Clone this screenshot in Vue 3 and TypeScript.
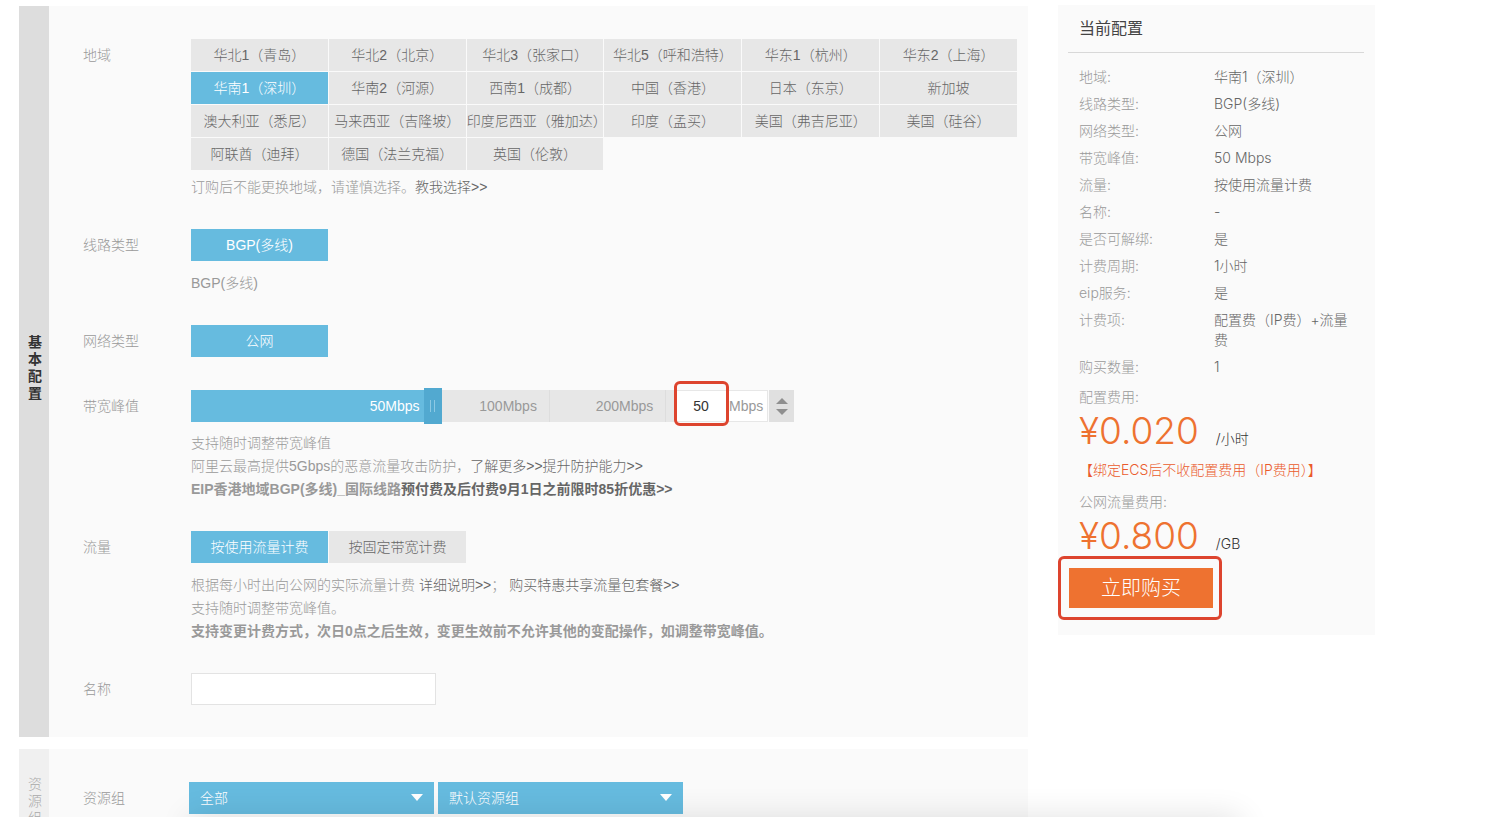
<script setup lang="ts">
import { computed, ref } from 'vue'

interface SummaryItem {
  label: string
  value: string
}

const regions: string[] = [
  '华北1（青岛）', '华北2（北京）', '华北3（张家口）', '华北5（呼和浩特）', '华东1（杭州）', '华东2（上海）',
  '华南1（深圳）', '华南2（河源）', '西南1（成都）', '中国（香港）', '日本（东京）', '新加坡',
  '澳大利亚（悉尼）', '马来西亚（吉隆坡）', '印度尼西亚（雅加达）', '印度（孟买）', '美国（弗吉尼亚）', '美国（硅谷）',
  '阿联酋（迪拜）', '德国（法兰克福）', '英国（伦敦）',
]
const billingModes: string[] = ['按使用流量计费', '按固定带宽计费']

const region = ref('华南1（深圳）')
const billing = ref('按使用流量计费')
const bandwidth = ref(50)
const name = ref('')
const groupScope = ref('全部')
const group = ref('默认资源组')

// The scale is piecewise linear: [bandwidth, percent of the track].
const stops: [number, number][] = [[0, 0], [50, 50], [100, 74], [200, 98]]

function interpolate(x: number, from: 0 | 1, to: 0 | 1): number {
  for (let i = 1; i < stops.length; i++) {
    const a = stops[i - 1]
    const b = stops[i]
    if (x <= b[from]) {
      return a[to] + ((x - a[from]) / (b[from] - a[from])) * (b[to] - a[to])
    }
  }
  return stops[stops.length - 1][to]
}

const position = computed({
  get: () => interpolate(bandwidth.value, 0, 1),
  set: (p: number) => {
    bandwidth.value = Math.max(1, Math.round(interpolate(p, 1, 0)))
  },
})

function step(delta: number) {
  bandwidth.value = Math.min(200, Math.max(1, bandwidth.value + delta))
}

const summary = computed<SummaryItem[]>(() => [
  { label: '地域', value: region.value },
  { label: '线路类型', value: 'BGP(多线)' },
  { label: '网络类型', value: '公网' },
  { label: '带宽峰值', value: `${bandwidth.value} Mbps` },
  { label: '流量', value: billing.value },
  { label: '名称', value: name.value || '-' },
  { label: '是否可解绑', value: '是' },
  { label: '计费周期', value: '1小时' },
  { label: 'eip服务', value: '是' },
  { label: '计费项', value: '配置费（IP费）+流量费' },
  { label: '购买数量', value: '1' },
])
</script>

<template>
  <div class="page" lang="zh-CN">
    <main class="main">
      <section class="panel">
        <h2 class="tab tab-active"><span>基本配置</span></h2>
        <div class="rows">
          <div class="row" role="group" aria-labelledby="l-region">
            <span id="l-region" class="label">地域</span>
            <div>
              <div class="regions">
                <button
                  v-for="r in regions"
                  :key="r"
                  type="button"
                  class="option"
                  :class="{ on: r === region }"
                  :aria-pressed="r === region"
                  @click="region = r"
                >{{ r }}</button>
              </div>
              <p class="notes notes-tight">订购后不能更换地域，请谨慎选择。<a href="#">教我选择&gt;&gt;</a></p>
            </div>
          </div>

          <div class="row" role="group" aria-labelledby="l-line">
            <span id="l-line" class="label">线路类型</span>
            <div>
              <div class="options">
                <button type="button" class="option on" aria-pressed="true">BGP(多线)</button>
              </div>
              <p class="notes">BGP(多线)</p>
            </div>
          </div>

          <div class="row" role="group" aria-labelledby="l-net">
            <span id="l-net" class="label">网络类型</span>
            <div class="options">
              <button type="button" class="option on" aria-pressed="true">公网</button>
            </div>
          </div>

          <div class="row">
            <label class="label label-slider" for="bandwidth">带宽峰值</label>
            <div>
              <div class="bandwidth">
                <div class="slider">
                  <div class="fill" :style="{ width: position + '%' }"></div>
                  <span class="seg seg-first">50Mbps</span>
                  <span class="seg">100Mbps</span>
                  <span class="seg">200Mbps</span>
                  <div class="handle" :style="{ left: position + '%' }"><i></i><i></i></div>
                  <input v-model.number="position" class="range" type="range" min="0" max="98" step="1" aria-label="带宽峰值">
                </div>
                <div class="amount">
                  <input id="bandwidth" v-model.number="bandwidth" type="text" inputmode="numeric">
                  <span>Mbps</span>
                </div>
                <div class="stepper">
                  <button type="button" aria-label="增加" @click="step(1)">
                    <svg width="12" height="6" viewBox="0 0 12 6"><path d="M0 6 6 0l6 6z" fill="#8f8f8f" /></svg>
                  </button>
                  <button type="button" aria-label="减少" @click="step(-1)">
                    <svg width="12" height="6" viewBox="0 0 12 6"><path d="M0 0h12L6 6z" fill="#8f8f8f" /></svg>
                  </button>
                </div>
              </div>
              <p class="notes notes-slider">
                支持随时调整带宽峰值<br>
                阿里云最高提供5Gbps的恶意流量攻击防护，<a href="#">了解更多&gt;&gt;</a><a href="#">提升防护能力&gt;&gt;</a><br>
                <b>EIP香港地域BGP(多线)_国际线路<a href="#">预付费及后付费9月1日之前限时85折优惠&gt;&gt;</a></b>
              </p>
            </div>
          </div>

          <div class="row" role="group" aria-labelledby="l-bill">
            <span id="l-bill" class="label">流量</span>
            <div>
              <div class="options">
                <button
                  v-for="m in billingModes"
                  :key="m"
                  type="button"
                  class="option"
                  :class="{ on: m === billing }"
                  :aria-pressed="m === billing"
                  @click="billing = m"
                >{{ m }}</button>
              </div>
              <p class="notes">
                根据每小时出向公网的实际流量计费 <a href="#">详细说明&gt;&gt;</a>； <a href="#">购买特惠共享流量包套餐&gt;&gt;</a><br>
                支持随时调整带宽峰值。<br>
                <b>支持变更计费方式，次日0点之后生效，变更生效前不允许其他的变配操作，如调整带宽峰值。</b>
              </p>
            </div>
          </div>

          <div class="row">
            <label class="label" for="name">名称</label>
            <input id="name" v-model="name" class="text-input" type="text">
          </div>
        </div>
      </section>

      <section class="panel">
        <h2 class="tab"><span>资源组</span></h2>
        <div class="rows rows-group">
          <div class="row row-group">
            <label class="label" for="scope">资源组</label>
            <div class="selects">
              <div class="select">
                <select id="scope" v-model="groupScope"><option>全部</option></select>
                <svg width="12" height="7" viewBox="0 0 12 7"><path d="M0 0h12L6 7z" fill="#fff" /></svg>
              </div>
              <div class="select">
                <select v-model="group" aria-label="资源组名称"><option>默认资源组</option></select>
                <svg width="12" height="7" viewBox="0 0 12 7"><path d="M0 0h12L6 7z" fill="#fff" /></svg>
              </div>
            </div>
          </div>
        </div>
      </section>
    </main>

    <aside class="summary">
      <h2>当前配置</h2>
      <div class="body">
        <dl>
          <div v-for="item in summary" :key="item.label">
            <dt>{{ item.label }}:</dt>
            <dd>{{ item.value }}</dd>
          </div>
        </dl>
        <div class="fee-label">配置费用:</div>
        <div class="fee"><strong>¥0.020</strong><span>/小时</span></div>
        <p class="promo">【绑定ECS后不收配置费用（IP费用）】</p>
        <div class="fee-label">公网流量费用:</div>
        <div class="fee"><strong>¥0.800</strong><span>/GB</span></div>
      </div>
      <div class="buy"><button type="button">立即购买</button></div>
    </aside>

    <div class="dock-shadow"></div>
  </div>
</template>

<style>
html {
  scrollbar-width: none;
}
body {
  background: #fff;
}
</style>

<style scoped>
.page {
  box-sizing: border-box;
  display: flex;
  align-items: flex-start;
  gap: 30px;
  padding: 5px 125px 0 19px;
  font-family: "Liberation Sans", "Noto Sans CJK SC", sans-serif;
  font-size: 14px;
  font-weight: 300;
  line-height: 23px;
  color: #999;
}
h2, p, dl, dd {
  margin: 0;
}
button, input, select {
  font: inherit;
  border: 0;
  border-radius: 0;
  margin: 0;
  padding: 0;
  box-sizing: border-box;
}
button {
  cursor: pointer;
}
a {
  color: #666;
  text-decoration: none;
}

.main {
  flex: 1;
  min-width: 0;
  display: flex;
  flex-direction: column;
  gap: 12px;
  padding-top: 1px;
}
.panel {
  display: flex;
  background: #fafafa;
}
.tab {
  flex: none;
  box-sizing: border-box;
  width: 30px;
  padding: 0 0 8px 2px;
  display: flex;
  align-items: center;
  justify-content: center;
  background: #f0f0f0;
  font-size: 14px;
  font-weight: 300;
  line-height: 17px;
  color: #aaa;
}
.tab span {
  width: 14px;
  word-break: break-all;
}
.tab-active {
  background: #ddd;
  color: #333;
  font-weight: 700;
}
.rows {
  flex: 1;
  min-width: 0;
  display: flex;
  flex-direction: column;
  gap: 30px;
  padding: 33px 11px 32px 34px;
}
.rows-group {
  padding-bottom: 48px;
}
.row {
  display: grid;
  grid-template-columns: 108px minmax(0, 1fr);
  align-items: start;
}
.row-group {
  grid-template-columns: 106px minmax(0, 1fr);
}
.label {
  line-height: 32px;
}
.label-slider {
  line-height: 38px;
}

.regions {
  display: grid;
  grid-template-columns: repeat(6, 1fr);
  gap: 1px;
}
.options {
  display: flex;
  gap: 1px;
}
.option {
  height: 32px;
  background: #e7e7e7;
  color: #666;
  white-space: nowrap;
  min-width: 0;
}
.options .option {
  width: 137px;
}
.option.on {
  background: #66bbdf;
  color: #fff;
}
.notes {
  margin-top: 11px;
}
.notes-tight {
  margin-top: 6px;
}
.notes-slider {
  margin-top: 7px;
}
.notes b {
  font-weight: 700;
}

.bandwidth {
  display: flex;
  align-items: center;
  height: 38px;
}
.slider {
  position: relative;
  display: flex;
  width: 485px;
  height: 32px;
  line-height: 32px;
  background: #e7e7e7;
}
.fill {
  position: absolute;
  top: 0;
  bottom: 0;
  left: 0;
  background: #66bbdf;
}
.seg {
  position: relative;
  box-sizing: border-box;
  width: 24%;
  padding-right: 12px;
  text-align: right;
  border-right: 1px solid #ddd;
}
.seg-first {
  width: 50%;
  padding-right: 14px;
  border-right: 0;
  color: #fff;
}
.handle {
  position: absolute;
  top: -2px;
  bottom: -2px;
  width: 18px;
  margin-left: -10px;
  display: flex;
  align-items: center;
  justify-content: center;
  gap: 3px;
  background: #52a9d0;
}
.handle i {
  width: 1px;
  height: 12px;
  background: #8cc9e4;
}
.range {
  position: absolute;
  inset: 0;
  width: 100%;
  height: 100%;
  opacity: 0;
  cursor: pointer;
}
.amount {
  position: relative;
  box-sizing: border-box;
  display: flex;
  align-items: center;
  gap: 4px;
  width: 92px;
  height: 32px;
  border: 1px solid #e7e7e7;
  background: #fff;
}
.amount::after {
  content: "";
  position: absolute;
  top: -10px;
  left: -3px;
  box-sizing: border-box;
  width: 55px;
  height: 45px;
  border: 3px solid #dd442e;
  border-radius: 6px;
  pointer-events: none;
}
.amount input {
  width: 48px;
  height: 30px;
  flex: none;
  color: #333;
  text-align: center;
  background: none;
}
.stepper {
  display: flex;
  flex-direction: column;
  justify-content: center;
  gap: 5px;
  width: 25px;
  height: 32px;
  margin-left: 1px;
  background: #e0e0e0;
}
.stepper button {
  display: flex;
  justify-content: center;
  background: none;
}

.text-input {
  width: 245px;
  height: 32px;
  padding: 0 10px;
  border: 1px solid #e3e3e3;
  background: #fff;
  color: #666;
}
.selects {
  display: flex;
  gap: 4px;
}
.select {
  position: relative;
  width: 245px;
}
.select select {
  appearance: none;
  display: block;
  width: 100%;
  height: 32px;
  padding: 0 30px 0 11px;
  background: #66bbdf;
  color: #fff;
}
.select svg {
  position: absolute;
  top: 12px;
  right: 11px;
  pointer-events: none;
}

.summary {
  flex: none;
  box-sizing: border-box;
  width: 317px;
  padding: 0 11px 27px 10px;
  background: #fafafa;
  font-family: Inter, "Noto Sans CJK SC", sans-serif;
  line-height: 20px;
}
.summary h2 {
  padding: 0 11px;
  border-bottom: 1px solid #d8d8d8;
  font-size: 16px;
  font-weight: 400;
  line-height: 47px;
  color: #444;
}
.body {
  padding: 14px 11px 0;
}
dl {
  display: flex;
  flex-direction: column;
  gap: 7px;
  margin-bottom: 10px;
}
dl > div {
  display: grid;
  grid-template-columns: 135px 140px;
}
dd {
  color: #666;
}
.fee {
  display: flex;
  align-items: baseline;
  gap: 17px;
  height: 48px;
  color: #333;
}
.fee strong {
  font-size: 37px;
  font-weight: 300;
  line-height: 48px;
  color: #ee7230;
}
.promo {
  margin: 5px 0 12px;
  color: #ea5a2c;
  white-space: nowrap;
}
.buy {
  position: relative;
  width: 144px;
  margin: 8px 0 0 1px;
}
.buy::after {
  content: "";
  position: absolute;
  inset: -12px -9px -12px -11px;
  border: 3px solid #dd442e;
  border-radius: 6px;
  pointer-events: none;
}
.buy button {
  display: block;
  width: 100%;
  height: 40px;
  background: #ee7230;
  color: #fff;
  font-size: 20px;
}
.dock-shadow {
  position: fixed;
  top: 100%;
  left: 190px;
  right: 260px;
  height: 60px;
  box-shadow: 0 0 32px rgba(0, 0, 0, 0.12);
  pointer-events: none;
}
</style>
